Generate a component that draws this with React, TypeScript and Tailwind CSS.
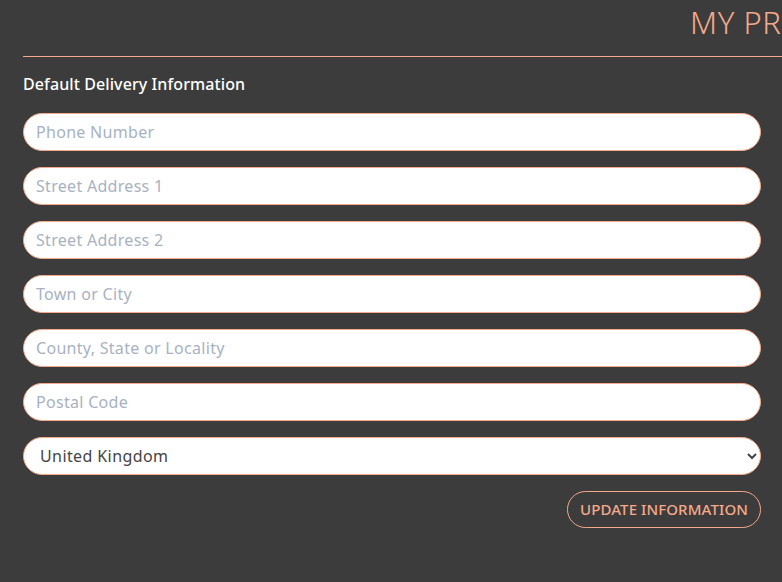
import React from "react";

const fields: string[] = [
  "Phone Number",
  "Street Address 1",
  "Street Address 2",
  "Town or City",
  "County, State or Locality",
  "Postal Code",
];

const App: React.FC = () => {
  return (
    <div className="min-h-screen w-full overflow-hidden bg-[#3c3c3c] font-['Noto_Sans',sans-serif]">
      {/* Header */}
      <div className="ml-[23px] h-[57px] border-b border-[#f5a98a] flex items-start">
        <h1 className="pl-[667px] pt-[1px] whitespace-nowrap text-[31px] leading-[42px] tracking-[0.6px] font-light text-[#f5a98a]">
          MY PROFILE
        </h1>
      </div>

      {/* Form */}
      <div className="pl-[23px] pr-[21px]">
        <h2 className="mt-[16px] mb-[18px] text-[16px] leading-[22px] tracking-[0.1px] font-medium text-white">
          Default Delivery Information
        </h2>
        <div className="flex flex-col gap-[16px]">
          {fields.map((f) => (
            <input
              key={f}
              type="text"
              placeholder={f}
              className="h-[38px] w-full rounded-full border border-[#f5a98a] bg-white px-[12px] text-[16px] tracking-[0.3px] text-[#444] placeholder:text-[#a7b2c2] outline-none"
            />
          ))}
          <select
            defaultValue="GB"
            className="h-[38px] w-full rounded-full border border-[#f5a98a] bg-white pl-[12px] pr-[6px] text-[16px] tracking-[0.4px] text-[#444] outline-none"
          >
            <option value="GB">United Kingdom</option>
            <option value="US">United States</option>
          </select>
        </div>
        <div className="mt-[16px] flex justify-end">
          <button className="h-[37px] rounded-full border border-[#f5a98a] px-[12px] text-[15px] tracking-[0.1px] font-medium uppercase text-[#f5a98a]">
            Update Information
          </button>
        </div>
      </div>
    </div>
  );
};

export default App;
